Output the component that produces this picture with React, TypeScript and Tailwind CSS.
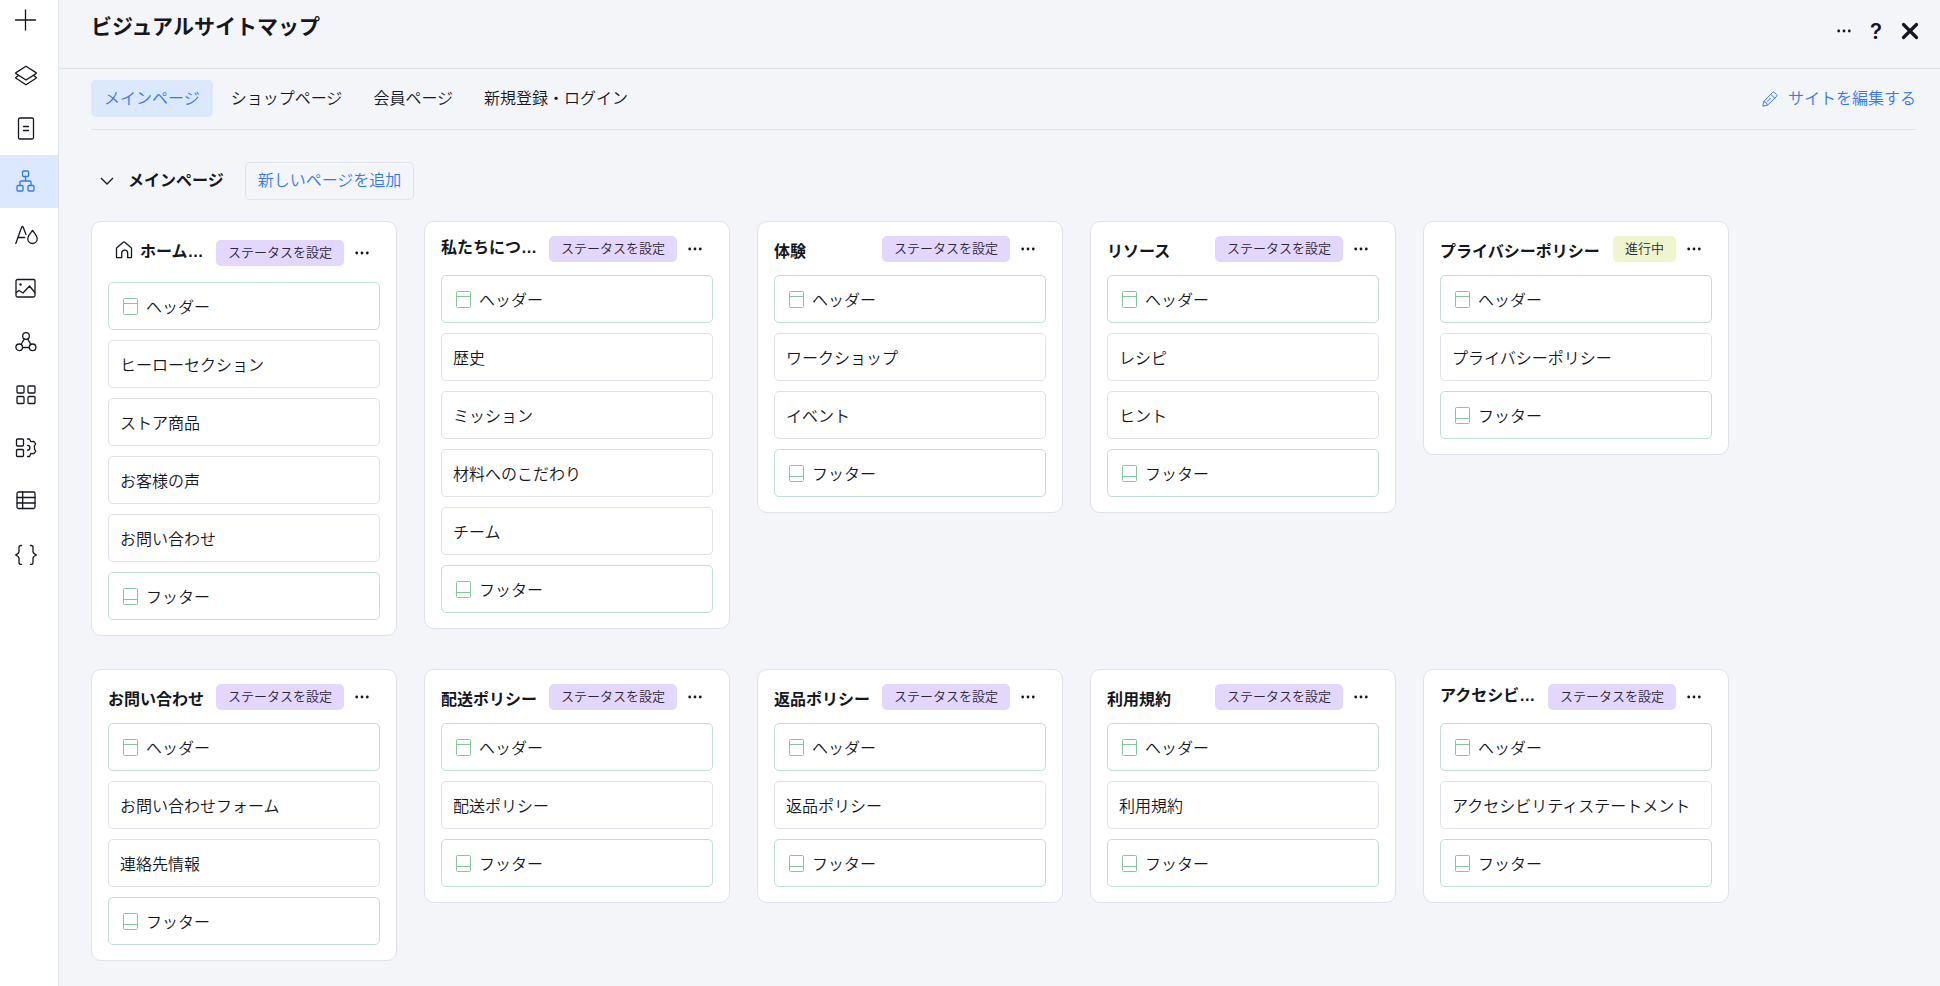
import type { ReactNode } from "react";
import clsx from "clsx";

type Status = "unset" | "progress";

interface SitePage {
  title: string;
  status: Status;
  home?: boolean;
  sections: string[];
}

const HEADER = "ヘッダー";
const FOOTER = "フッター";

const STATUS_LABELS: Record<Status, string> = {
  unset: "ステータスを設定",
  progress: "進行中",
};

const TABS = ["メインページ", "ショップページ", "会員ページ", "新規登録・ログイン"];

const PAGES: SitePage[] = [
  {
    title: "ホーム…",
    status: "unset",
    home: true,
    sections: ["ヒーローセクション", "ストア商品", "お客様の声", "お問い合わせ"],
  },
  { title: "私たちにつ…", status: "unset", sections: ["歴史", "ミッション", "材料へのこだわり", "チーム"] },
  { title: "体験", status: "unset", sections: ["ワークショップ", "イベント"] },
  { title: "リソース", status: "unset", sections: ["レシピ", "ヒント"] },
  { title: "プライバシーポリシー", status: "progress", sections: ["プライバシーポリシー"] },
  { title: "お問い合わせ", status: "unset", sections: ["お問い合わせフォーム", "連絡先情報"] },
  { title: "配送ポリシー", status: "unset", sections: ["配送ポリシー"] },
  { title: "返品ポリシー", status: "unset", sections: ["返品ポリシー"] },
  { title: "利用規約", status: "unset", sections: ["利用規約"] },
  { title: "アクセシビ…", status: "unset", sections: ["アクセシビリティステートメント"] },
];

function Icon({ children }: { children: ReactNode }) {
  return (
    <svg
      viewBox="0 0 24 24"
      className="h-6 w-6"
      fill="none"
      stroke="currentColor"
      strokeWidth="1.3"
      strokeLinecap="round"
      strokeLinejoin="round"
      aria-hidden
    >
      {children}
    </svg>
  );
}

const NAV: { label: string; icon: ReactNode }[] = [
  {
    label: "レイヤー",
    icon: (
      <>
        <path d="M12 2.2 22 8.6c.5.3.5.7 0 1L12 16 2 9.6c-.5-.3-.5-.7 0-1z" />
        <path d="M4.2 11.6 2 13.2c-.5.3-.5.7 0 1L12 20.8l10-6.6c.5-.3.5-.7 0-1l-2.2-1.6" />
      </>
    ),
  },
  {
    label: "ページ",
    icon: (
      <>
        <rect x="4.5" y="1" width="15" height="21" rx="1.5" />
        <path d="M9.5 9.5h5M9.5 13.5h5" />
      </>
    ),
  },
  {
    label: "サイトマップ",
    icon: (
      <>
        <rect x="8.5" y="1" width="6" height="5.5" rx="1" />
        <rect x="3" y="15.5" width="6" height="5.5" rx="1" />
        <rect x="14" y="15.5" width="6" height="5.5" rx="1" />
        <path d="M11.5 6.5V11M6 15.5V12q0-1 1-1h9q1 0 1 1v3.5" />
      </>
    ),
  },
  {
    label: "デザイン",
    icon: (
      <>
        <path d="M1.8 20.5 7.5 4.5q.9-2 1.8 0l2.7 7M4.3 14.5h6.4" />
        <path d="M18.5 7.5c2 2.8 4.7 5.3 4.7 8.3a4.7 4.7 0 0 1-9.4 0c0-3 2.7-5.5 4.7-8.3z" />
      </>
    ),
  },
  {
    label: "画像",
    icon: (
      <>
        <rect x="2" y="3.5" width="19" height="17.5" rx="1.5" />
        <circle cx="6.5" cy="8.5" r="1.2" fill="currentColor" stroke="none" />
        <path d="M2.3 16.5 5 14.5l4 2.5 6.5-7 5.3 6.5" />
      </>
    ),
  },
  {
    label: "接続",
    icon: (
      <>
        <circle cx="12" cy="7" r="3.3" />
        <circle cx="5.2" cy="18.3" r="3.3" />
        <circle cx="18.6" cy="18.3" r="3.3" />
        <path d="M10.4 9.9 7 15.5M13.6 9.9l3.3 5.6M8.5 18.5h6.8" />
      </>
    ),
  },
  {
    label: "アプリ",
    icon: (
      <>
        <rect x="3" y="4" width="7" height="7" rx="1" />
        <rect x="14" y="4" width="7" height="7" rx="1" />
        <rect x="3" y="14.5" width="7" height="7" rx="1" />
        <rect x="14" y="14.5" width="7" height="7" rx="1" />
      </>
    ),
  },
  {
    label: "アプリ設定",
    icon: (
      <>
        <rect x="2.5" y="4" width="7" height="7" rx="1" />
        <rect x="2.5" y="14.5" width="7" height="7" rx="1" />
        <path d="M13.5 4h2l1.2 2.6 3.1-.2 1.9 2.5-1.3 2.1.1 3.2 1.3 2-1.9 2.5-3.1-.2-1.2 3h-2" />
        <path d="M13.5 10.3a2.4 2.4 0 0 1 0 4.9" />
      </>
    ),
  },
  {
    label: "データ",
    icon: (
      <>
        <rect x="3" y="4" width="18" height="16.5" rx="1.5" />
        <path d="M8.7 4v16.5M3 9.5h18M3 15h18" />
      </>
    ),
  },
  {
    label: "コード",
    icon: (
      <>
        <path d="M7.5 4.5H7q-2 0-2 2v4q0 2.2-3.5 3.5Q5 15.3 5 17.5v4q0 2 2 2h.5" />
        <path d="M16.5 4.5h.5q2 0 2 2v4q0 2.2 3.5 3.5Q19 15.3 19 17.5v4q0 2-2 2h-.5" />
      </>
    ),
  },
];

function Dots() {
  return (
    <svg viewBox="0 0 14 4" className="h-1 w-3.5" fill="currentColor" aria-hidden>
      <circle cx="1.7" cy="2" r="1.4" />
      <circle cx="7" cy="2" r="1.4" />
      <circle cx="12.3" cy="2" r="1.4" />
    </svg>
  );
}

function SectionIcon({ footer }: { footer?: boolean }) {
  return (
    <svg viewBox="0 0 15 17" className="h-[17px] w-[15px] text-[#84c79f]" fill="none" stroke="currentColor" aria-hidden>
      <rect x="0.5" y="0.5" width="14" height="16" rx="1" />
      <path d={footer ? "M.5 11.5h14" : "M.5 5.5h14"} />
    </svg>
  );
}

function Sidebar() {
  return (
    <nav className="flex w-[59px] shrink-0 flex-col border-r border-[#dfe2e9] bg-white">
      <button aria-label="追加" className="mb-[9px] flex h-10 items-center justify-center pr-1.5">
        <Icon>
          <path d="M11.5 2v20M1.5 12h20" />
        </Icon>
      </button>
      {NAV.map((item) => {
        const active = item.label === "サイトマップ";
        return (
          <button
            key={item.label}
            aria-label={item.label}
            aria-current={active ? "page" : undefined}
            className={clsx("flex h-[53px] items-center justify-center pr-1.5", active && "bg-[#dbe8fe] text-[#3279ee]")}
          >
            <Icon>{item.icon}</Icon>
          </button>
        );
      })}
    </nav>
  );
}

function PageCard({ page }: { page: SitePage }) {
  const clipped = page.title.endsWith("…");
  return (
    <article className="w-[306px] rounded-[10px] border border-[#dfe1ea] bg-white px-4 pb-[15px]">
      <div className={clsx("flex items-center", page.home ? "h-[60px] pt-0.5" : "h-[53px]")}>
        {page.home && (
          <svg
            viewBox="0 0 18 18"
            className="mr-[7px] mb-1.5 ml-[7px] h-[18px] w-[18px] shrink-0"
            fill="none"
            stroke="currentColor"
            strokeWidth="1.3"
            strokeLinejoin="round"
            aria-hidden
          >
            <path d="M1.5 7.5q0-.7.5-1.1L8.3 1.2q.7-.5 1.4 0L16 6.4q.5.4.5 1.1V16q0 .7-.7.7h-3.1v-4.500a3 3 0 0 0-6 0v4.500H2.200q-.7 0-.7-.7z" />
          </svg>
        )}
        <h3 className={clsx("min-w-0 flex-1 whitespace-nowrap text-base font-bold leading-6", clipped ? "pb-0.5" : "pt-1.5")}>
          {page.title}
        </h3>
        <button
          className={clsx(
            "h-[26px] rounded-[5px] px-3 text-[13px] leading-[26px] text-[#2b2838]",
            page.status === "unset" ? "bg-[#e4d7fd]" : "bg-[#eff5cd]",
          )}
        >
          {STATUS_LABELS[page.status]}
        </button>
        <button aria-label="その他" className="flex h-[26px] w-9 items-center justify-center">
          <Dots />
        </button>
      </div>
      <ul className="flex flex-col gap-2.5">
        <li className="flex h-12 items-center gap-2 rounded-[5px] border border-[#bfe0cf] px-3.5">
          <SectionIcon />
          <span className="pt-1">{HEADER}</span>
        </li>
        {page.sections.map((s) => (
          <li key={s} className="flex h-12 items-center rounded-[5px] border border-[#dfe2e9] px-[11px]">
            <span className="pt-1">{s}</span>
          </li>
        ))}
        <li className="flex h-12 items-center gap-2 rounded-[5px] border border-[#bfe0cf] px-3.5">
          <SectionIcon footer />
          <span className="pt-1">{FOOTER}</span>
        </li>
      </ul>
    </article>
  );
}

export default function App() {
  return (
    <div className="flex min-h-screen bg-[#f3f5f9] font-['Liberation_Sans','Noto_Sans_CJK_JP',sans-serif] text-base leading-6 font-[350] text-[#14171f]">
      <Sidebar />
      <div className="min-w-0 flex-1">
        <header className="flex h-[69px] items-start justify-between border-b border-[#dfe2e9] pt-[13px] pr-[21px] pl-8">
          <h1 className="text-[21px] font-bold leading-7">ビジュアルサイトマップ</h1>
          <div className="flex items-center gap-[17px] pt-1">
            <button aria-label="その他">
              <Dots />
            </button>
            <button className="w-4 font-['Inter',sans-serif] text-[22px] font-semibold leading-7">?</button>
            <button aria-label="閉じる">
              <svg viewBox="0 0 18 18" className="h-[18px] w-[18px]" fill="none" stroke="currentColor" strokeWidth="3.2" strokeLinecap="round" aria-hidden>
                <path d="m2.5 2.5 13 13M15.5 2.5l-13 13" />
              </svg>
            </button>
          </div>
        </header>

        <main className="pr-6 pl-8">
          <div className="flex items-center justify-between border-b border-[#dfe2e9] pt-[11px] pb-3">
            <div className="flex gap-[5px]" role="tablist">
              {TABS.map((tab, i) => (
                <button
                  key={tab}
                  role="tab"
                  aria-selected={i === 0}
                  className={clsx("h-[37px] rounded-[5px] px-[13px]", i === 0 && "bg-[#dbe8fe] text-[#3279ee]")}
                >
                  {tab}
                </button>
              ))}
            </div>
            <a href="#edit" className="flex items-center gap-2.5 text-[#3279ee]">
              <svg viewBox="0 0 16 16" className="h-4 w-4" fill="none" stroke="currentColor" strokeLinejoin="round" aria-hidden>
                <path d="m.8 15.2 1-4.7 8.700-9q1-1 2 0l2 2q1 1 0 2l-9 8.700z" />
                <path d="m8.800 3.300 4 4M1.800 10.500q2.700.2 3.700 3.700M5 10.800l3.800-3.900" />
              </svg>
              サイトを編集する
            </a>
          </div>

          <section className="pt-8 pb-6">
            <div className="flex items-center">
              <button aria-label="折りたたむ" className="ml-[9px] flex h-6 w-3.5 items-center">
                <svg viewBox="0 0 14 8" className="h-2 w-3.5" fill="none" stroke="currentColor" strokeWidth="1.3" aria-hidden>
                  <path d="m1 1 6 6 6-6" />
                </svg>
              </button>
              <h2 className="mr-[21px] ml-3.5 font-bold">メインページ</h2>
              <button className="h-[38px] rounded-[5px] border border-[#dfe2e9] px-3 text-[#3279ee]">
                新しいページを追加
              </button>
            </div>
            <div className="mt-[21px] flex flex-wrap items-start gap-x-[27px] gap-y-[33px]">
              {PAGES.map((page) => (
                <PageCard key={page.title} page={page} />
              ))}
            </div>
          </section>
        </main>
      </div>
    </div>
  );
}
